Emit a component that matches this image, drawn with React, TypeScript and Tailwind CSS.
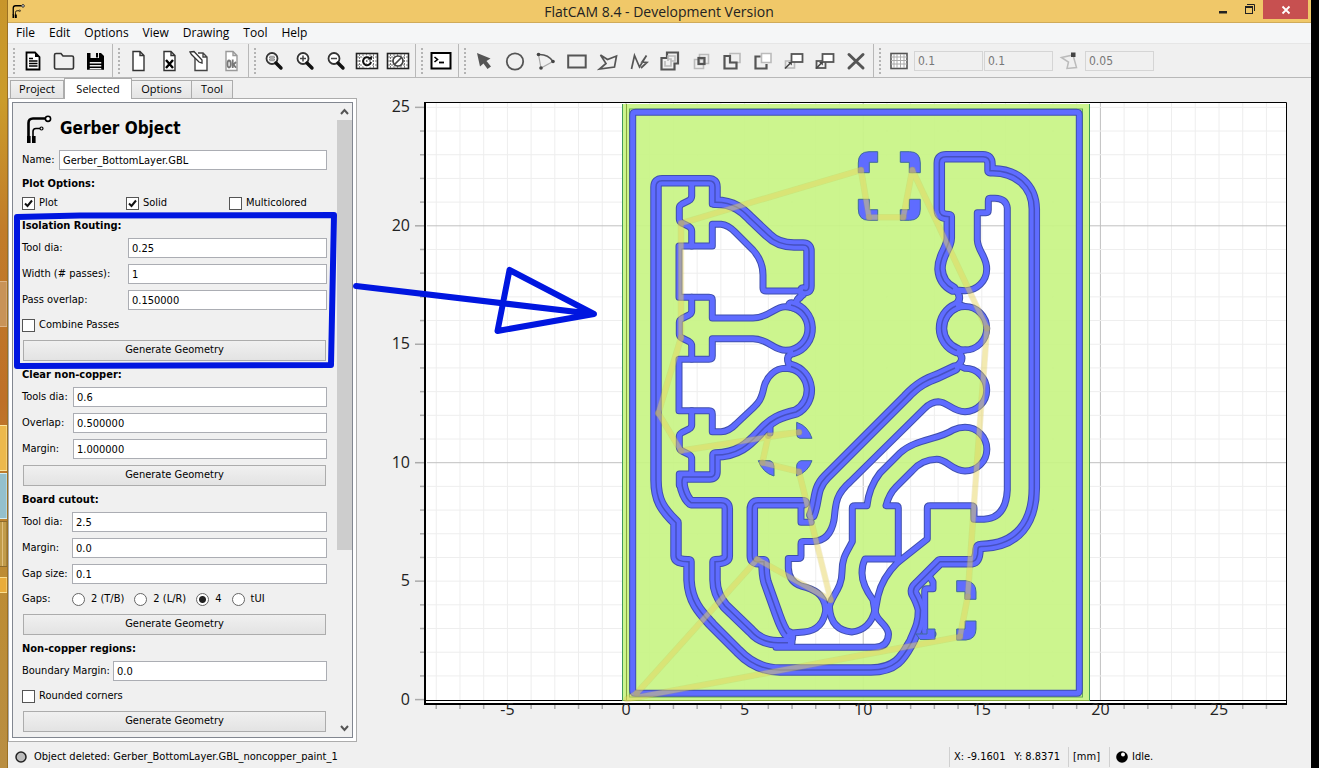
import React, { Fragment, ReactNode } from 'react'

interface FieldProps {
  id: string
  label: string
  value: string
}

const tahoma = "font-['DejaVu_Sans_Condensed','DejaVu_Sans',sans-serif]"
const segoe = "font-['Open_Sans','Noto_Sans',sans-serif]"

// Scene units: one millimetre on each axis, origin at the lower left of the board
const UNIT_X = 23.72
const UNIT_Y = 23.69
const ORIGIN_X = 626
const ORIGIN_Y = 699.6

const px = (mm: number) => ORIGIN_X + mm * UNIT_X
const py = (mm: number) => ORIGIN_Y - mm * UNIT_Y

const range = (from: number, to: number) => Array.from({ length: to - from + 1 }, (_, i) => from + i)

// Areas of bare board between the tracks
const pockets = [
  'M679 246 H712.3 V224.3 H721 Q728 225 735 232 L753 250 Q763 261 763 275 V288 Q763 291 766 291 H800 Q803 298 798 299 Q795 302 798 306 L796 309 Q791 306.7 785.7 306.7 C775 306 769 318 753 318 H712.3 V300 Q712.3 297.3 709 297.3 H679 Z',
  'M679 359.3 H709 Q712.3 359.3 712.3 356 V338.7 H753 C769 339 773 350.3 785.7 350.3 L790 350 L794 352 Q786 355 788 361 L792 369 L785.7 368.3 C775 368.3 767 376 764 387 C761 402 757 404 752 409 L736 424 Q729 431.5 721 431.7 H712.3 V414 Q712.3 410.7 709 410.7 H679 Z',
  'M1007.3 490 V208 Q1006 198.5 995 198.3 H990 Q988.3 198.3 988.3 201 V210 Q988.3 212.7 986 212.7 H977.3 V240 C978 252 986.7 256 986.7 269 A21.7 21.7 0 0 1 965 290.7 L956 290 Q962 297 958 304 L965 306.6 A21.7 21.7 0 0 1 965 350 L958 352 Q965 359 958 365 L965 368.3 A21.7 21.7 0 0 1 965 411.7 C952 411.5 948 402 938.3 401.7 Q931 402 925 408 L850 482 C834 496 836 506 834 520 Q830 541 813 541.5 H803 Q801 541.5 801 544 V556 Q801 558.5 798 558.5 H788.3 V568 Q789 582 801 586 C814 589 824 594 825.5 608 L829 608 C831 596 842 589 842 572 C842 557 847 552 852.3 541.7 V508 Q852.3 505.7 855 505.7 H867 Q869 487 880 473 L900 453 C915 439 938 440 953 430 Q959 427.3 965 427.3 A21.7 21.7 0 0 1 965 471 C952 471 947 459.3 936.7 459.3 Q922 459.5 912 471 L896 487 Q889 494 886 505.7 H896 Q898.3 505.7 898.3 508 V562 L927.3 539 V508 Q927.3 505.7 930 505.7 H971 Q974 505.7 974 508 V519.3 H984 Q1006 518 1007.3 490 Z',
  'M865 559 H898 V562 Q882 578 878 596 L875 612 L873 600 Q862 585 862 573 Q862 565 865 559 Z',
  'M792 633 L804 632 Q824 630 826 608 H829.5 Q831 630 851.7 632 Q870 630 875 610 C875 621 888 624 888.5 634 Q888 647 875 647.3 H776 L792 643 Z',
]

// Isolation passes, one tool width
const singles = [
  'M691.7 182 V196 Q691.7 199 689 200.5 L682 204 Q679.3 205.5 679.3 208 V219 Q679.3 221.7 682 223 L689 226.5 Q691.7 228.5 691.7 231 V246',
  'M712.3 182 V204 H718',
  'M691.7 297.3 V311 Q691.7 313.5 689 315 L682 318.5 Q679.3 320 679.3 322.5 V334 Q679.3 336.5 682 338 L689 341.5 Q691.7 343 691.7 346 V359',
  'M691.7 410.7 V425 Q691.7 427.5 689 429 L682 432.5 Q679.3 434 679.3 436.5 V447 Q679.3 449.5 682 451 L689 454.5 Q691.7 456 691.7 459 V474',
  'M679.3 485 V474 H692',
  'M770 433 V425',
  'M805 502.7 H801 V522.3 H811',
  'M929 576 L933 582 V588.7 H927 Q924.7 588.7 924.7 591 V631 Q924.7 634 927 634 H933',
  'M965 306.6 A21.7 21.7 0 0 0 965 350',
  'M635.5 112.3 H1076.5 Q1079.3 112.3 1079.3 115 V690.5 Q1079.3 693.3 1076.5 693.3 H635.5 Q632.7 693.3 632.7 690.5 V115 Q632.7 112.3 635.5 112.3 Z',
]

// Where the passes of two neighbouring nets run side by side
const doubles = [
  'M803 290 Q809 292 809 286 V251 Q809 245 803 245 H794 C785 245 776 243 768 235 L750 218 C745 213 736 202 715 202.3 V187 Q715 180.7 709 180.7 H662 Q656 180.7 656 187 V480 C656 500 662 509 676 522.7 V556 Q676 562 689 561.7 V580 C690 603 702 614 712 625 L738 651 Q756 670 780 670 H871 C898 670 904 655 912 641 C917 629 920.5 624 920.5 610 Q919 603 914 594 Q912 589 917 584.5 L940 561.7 H972 Q978 561 978 549 Q978 546.5 981 546.5 C1018 546 1034.3 522 1034.3 488 V209 C1034 185 1016 171 993 170.7 H990 V164 Q990 156.7 983 156.7 H946 Q939.3 156.7 939.3 163 V210 Q939.3 216.7 949.3 216.7 V238 C949 249 940 254 940 269 Q941 283 953 289',
  'M791 305 A24 24 0 0 1 793 351.5',
  'M791 366.5 A24.5 24.5 0 0 1 796 412 C779 416 772 420 764 428 C752 440 742 455 715 455 V472 Q715 477 710 477 H683 Q681 482 683 489 Q686 499 691 502.7 H721 Q727.3 502.7 727.3 509 V556 Q727.3 561.7 715 561.7 V580 Q715 594 725 606 L751 631 Q761 642.7 778 642.7 H788',
  'M787 634 C782 628 780 621 776 610 L766 582 Q764 575 764 561.7 H758 Q752.3 561.7 752.3 556 V509 Q752.3 502.7 758 502.7 H804',
  'M812 515 C818 500 814 489 826 477 L906 397 C918 384 927 380 938 376 L955 368',
  'M956 306 A24 24 0 0 0 957 350.500',
]

const necks = [
  'M803 295 Q793 300 799 307',
  'M795 352 Q783 357 791 368',
  'M956 291 Q963 297 955 305',
  'M957 351 Q967 358 957 366',
  'M790 632 Q796 637 789 643',
]

const blobs = [
  'M858.3 172.7 V163 Q858.3 151.7 869 151.7 H877.7 V162.3 H869.3 V172.7 Z',
  'M920.3 172.7 V163 Q920.3 151.7 909.6 151.7 H900.3 V162.3 H909.3 V172.7 Z',
  'M858.3 199.3 V209 Q858.3 220.3 869 220.3 H877.7 V209.7 H869.3 V199.3 Z',
  'M920.3 199.3 V209 Q920.3 220.3 909.6 220.3 H900.3 V209.7 H909.3 V199.3 Z',
  'M956.7 580.7 H966 Q976 582 976 592 V599.3 H965 V591.7 H956.7 Z',
  'M956.7 640 H966 Q976 639 976 629 V621 H965 V629 H956.7 Z',
  'M916 634 H927 V629 H935 V639.5 H920 Z',
  'M796.7 422.3 Q808 426 812 438.3 H800 Q796.7 438 796.7 434 Z',
  'M758.3 460.7 H770 Q774 462 774 466 V476 Q763 473 758.3 460.7 Z',
  'M812 460.7 H801 Q796.7 462 796.7 466 V476 Q808 472 812 460.7 Z',
]

const travel =
  'M626.7 699.3 L637 693 L757.3 559.3 L830.7 600 L799 471.7 L762.3 462.7 L768.3 435.7 L799 432.3 L681 450.7 L658.3 413.3 L681 337.7 V223.3 L861 170 L869 217.3 H903.3 L912.3 170 L987 328.3 L975 490 L967.7 596.7 L960 636.7 Z'

const travelStops = [
  [637, 693], [757.3, 559.3], [830.7, 600], [799, 471.7], [762.3, 462.7], [768.3, 435.7], [799, 432.3],
  [681, 450.7], [658.3, 413.3], [681, 337.7], [681, 223.3], [861, 170], [869, 217.3], [903.3, 217.3],
  [912.3, 170], [987, 328.3], [967.7, 596.7], [960, 636.7],
]

function TrackIcon({ className }: { className: string }) {
  return (
    <svg className={className} viewBox="0 0 26 28" fill="none" stroke="#000">
      <path d="M2.5 22 V8 Q2.5 3.5 7 3.5 H19" strokeWidth="2.6" />
      <path d="M7 22 V16.5 Q7 13.5 10 13.5 H14" strokeWidth="1.6" />
      <circle cx="22" cy="3.8" r="2.6" strokeWidth="1.6" fill="#fff" />
      <circle cx="15.5" cy="13.5" r="1.5" strokeWidth="1.2" />
      <path d="M2.8 21 V28 M7.8 21 V28" strokeWidth="3.6" />
    </svg>
  )
}

const page = 'M7 2.5 H14 L18 6.5 V21.5 H7 Z M14 2.5 V6.5 H18'

const magnifier = (
  <Fragment>
    <circle cx="10" cy="9.5" r="5.5" stroke="#333" strokeWidth="1.8" fill="#fff" />
    <path d="M14 14 L19 19" stroke="#111" strokeWidth="3.4" strokeLinecap="round" />
  </Fragment>
)

const mesh = (
  <Fragment>
    <rect x="1.5" y="4.5" width="21" height="15" stroke="#222" strokeWidth="1.6" fill="#fff" />
    <path d="M4.5 5 V19 M8 5 V19 M11.5 5 V19 M15 5 V19 M18.5 5 V19 M2 8 H22 M2 12 H22 M2 16 H22" stroke="#777" strokeWidth="1" strokeDasharray="2 1" />
  </Fragment>
)

const back = { stroke: '#bbb', strokeWidth: 1.6 }
const front = { stroke: '#555', strokeWidth: 2.2 }

const icons: Record<string, ReactNode> = {
  'New project': (
    <Fragment>
      <path d="M5.5 3.5 H14 L18.5 8 V20.5 H5.5 Z" stroke="#000" strokeWidth="1.8" fill="#fff" />
      <path d="M14 3 V8 H19 Z" fill="#000" />
      <path d="M8 9.5 H12 M8 12 H16.5 M8 14.5 H16.5 M8 17 H16.5" stroke="#000" strokeWidth="1.5" />
    </Fragment>
  ),
  'Open project': <path d="M2.5 6 Q2.5 4.5 4 4.5 H9 L11 7 H20 Q21.5 7 21.5 8.5 V18.5 Q21.5 20 20 20 H4 Q2.5 20 2.5 18.5 Z" stroke="#333" strokeWidth="1.6" />,
  'Save project': (
    <Fragment>
      <path d="M4 4 H18 L21 7 V20.5 H4 Z" fill="#000" />
      <path d="M7.5 4 H16 V9 H7.5 Z M6.5 12 H18.5 V20 H6.5 Z" fill="#eee" />
      <path d="M13 4 H15 V8.5 H13 Z M4 11 H21 V20.5 H18.5 V13 H6.5 V20.5 H4 Z M6.5 14.5 H18.5 V16 H6.5 Z M6.5 17.5 H18.5 V19 H6.5 Z" fill="#000" />
    </Fragment>
  ),
  'New geometry': <path d={page} stroke="#333" strokeWidth="1.4" fill="#fff" />,
  'Delete object': (
    <Fragment>
      <path d={page} stroke="#333" strokeWidth="1.4" fill="#fff" />
      <path d="M9 11 L16 19 M16 11 L9 19" stroke="#000" strokeWidth="2.4" />
    </Fragment>
  ),
  'Edit geometry': (
    <Fragment>
      <path d="M7 8 V21.5 H19 V8 L15 4 H10 M15 4 V8 H19" stroke="#444" strokeWidth="1.4" fill="#fff" />
      <path d="M2 3 L6 2.5 L14 11 V14 L11 13 L3.5 5.5 Z" stroke="#333" strokeWidth="1.3" fill="#fff" />
    </Fragment>
  ),
  'Update geometry': (
    <Fragment>
      <path d={page} stroke="#999" strokeWidth="1.4" fill="#fff" />
      <path d="M10 11.5 Q8.5 11.5 8.5 15 Q8.5 18.5 10 18.5 Q11.7 18.5 11.7 15 Q11.7 11.5 10 11.5 M13.7 10.5 V19 M17 13 L14.5 15.5 L17 18.7" stroke="#777" strokeWidth="1.8" />
    </Fragment>
  ),
  'Zoom fit': (
    <Fragment>
      {magnifier}
      <rect x="7.5" y="7" width="5" height="5" fill="#aaa" stroke="#888" strokeDasharray="1 1" />
    </Fragment>
  ),
  'Zoom in': (
    <Fragment>
      {magnifier}
      <path d="M7 9.5 H13 M10 6.5 V12.5" stroke="#444" strokeWidth="1.5" />
    </Fragment>
  ),
  'Zoom out': (
    <Fragment>
      {magnifier}
      <path d="M7 9.5 H13" stroke="#444" strokeWidth="1.5" />
    </Fragment>
  ),
  Replot: (
    <Fragment>
      {mesh}
      <path d="M15 9.5 A4.2 4.2 0 1 0 16.2 13" stroke="#fff" strokeWidth="4" />
      <path d="M14.5 9 A4 4 0 1 0 16 13" stroke="#111" strokeWidth="2" />
      <path d="M12.5 10.5 L17 10.8 L16.8 6.5 Z" fill="#111" />
    </Fragment>
  ),
  'Clear plot': (
    <Fragment>
      {mesh}
      <circle cx="12" cy="12" r="5" stroke="#444" strokeWidth="1.7" fill="#fff" />
      <path d="M8.5 15.5 L15.5 8.5" stroke="#444" strokeWidth="1.7" />
    </Fragment>
  ),
  Shell: (
    <Fragment>
      <rect x="2.5" y="4" width="19" height="15.5" stroke="#000" strokeWidth="2" fill="#fff" />
      <path d="M5.5 8 L8.5 10.5 L5.5 13" stroke="#000" strokeWidth="1.6" />
      <path d="M10 13.5 H15" stroke="#000" strokeWidth="1.8" />
    </Fragment>
  ),
  Select: <path d="M5 4 L18.5 9.5 L14.5 12 L19 17.5 L15.5 20 L11.5 14.5 L8 17.5 Z" fill="#555" />,
  Circle: <circle cx="12" cy="12.5" r="8.2" stroke="#555" strokeWidth="1.8" />,
  Arc: (
    <Fragment>
      <path d="M4.5 5.5 L7 19 L19 12.5" stroke="#aaa" strokeWidth="1.2" />
      <path d="M4.5 5.5 Q14 5 19 12.5" stroke="#555" strokeWidth="1.6" />
      <circle cx="4.5" cy="5.5" r="1.8" fill="#444" />
      <circle cx="7" cy="19" r="1.8" fill="#444" />
      <circle cx="19" cy="12.5" r="1.8" fill="#444" />
    </Fragment>
  ),
  Rectangle: <rect x="3.2" y="6.5" width="17.5" height="12" stroke="#555" strokeWidth="2" />,
  Polygon: <path d="M4.5 6 L11.5 10.5 L20.5 7 L18.5 18 L3.5 20 L10 14.5 Z" stroke="#555" strokeWidth="1.7" />,
  Path: <path d="M4.5 20 L7.5 6.5 L12.5 18 L19.5 6.5 L15 13 L20 13.5 L14 19" stroke="#555" strokeWidth="1.7" />,
  Union: (
    <Fragment>
      <path d="M9 3.5 H20 V14.5 H16.5 V20.5 H3.5 V9 H9 Z" {...front} />
      <path d="M7 12 V17 H13 V10 H10 M10 12 V7 H17 V12 H13" {...back} />
    </Fragment>
  ),
  Intersection: (
    <Fragment>
      <path d="M10.5 5.5 H19.5 V14.5 H10.5 Z M5.5 10.5 H14.5 V19.5 H5.5 Z" {...back} />
      <rect x="9.5" y="9" width="6" height="6" {...front} />
    </Fragment>
  ),
  Subtraction: (
    <Fragment>
      <path d="M10 4.5 H20 V13.5 H10 Z" {...back} />
      <path d="M4.5 7 H10 V13.5 H16.5 V19.5 H4.5 Z" {...front} />
    </Fragment>
  ),
  Cut: (
    <Fragment>
      <path d="M10.5 4.5 H20 V13.5 H10.5 Z" {...back} fill="#fff" />
      <path d="M9.5 7.5 H4.5 V19.5 H15.5 V15" {...front} />
    </Fragment>
  ),
  Move: (
    <Fragment>
      <rect x="3.5" y="12" width="9" height="7" {...back} />
      <rect x="9.5" y="5" width="11" height="8" {...front} strokeWidth={1.8} fill="#fff" />
      <path d="M3 19.5 L9 13.5" stroke="#444" strokeWidth="1.6" />
      <path d="M6 13 H9.8 V16.5 Z" fill="#444" />
    </Fragment>
  ),
  Copy: (
    <Fragment>
      <rect x="3.5" y="12" width="9" height="7" {...front} strokeWidth={1.8} />
      <rect x="9.5" y="5" width="11" height="8" {...front} strokeWidth={1.8} fill="#fff" />
      <path d="M3 19.5 L9 13.5" stroke="#444" strokeWidth="1.6" />
      <path d="M6 13 H9.8 V16.5 Z" fill="#444" />
    </Fragment>
  ),
  Delete: <path d="M5 5.5 L19 19 M19 5.5 L5 19" stroke="#555" strokeWidth="3" strokeLinecap="round" />,
  'Snap to grid': (
    <Fragment>
      <rect x="4" y="4.5" width="16" height="15" stroke="#555" strokeWidth="1.6" fill="#fff" />
      <path d="M7 5 V19 M10 5 V19 M13.5 5 V19 M17 5 V19 M4 8 H20 M4 11.5 H20 M4 15 H20" stroke="#aaa" />
    </Fragment>
  ),
  'Snap to corner': (
    <Fragment>
      <path d="M3.5 8.5 L15 6 L18.5 18.5 L9 19.5 L10.5 13 Z" stroke="#bbb" strokeWidth="1.5" />
      <rect x="13" y="3.5" width="4.5" height="4.5" fill="#444" />
    </Fragment>
  ),
}

const toolGroups = [
  ['New project', 'Open project', 'Save project'],
  ['New geometry', 'Delete object', 'Edit geometry', 'Update geometry'],
  ['Zoom fit', 'Zoom in', 'Zoom out', 'Replot', 'Clear plot'],
  ['Shell'],
  ['Select', 'Circle', 'Arc', 'Rectangle', 'Polygon', 'Path', 'Union', 'Intersection', 'Subtraction', 'Cut', 'Move', 'Copy', 'Delete'],
]

function Tool({ name }: { name: string }) {
  return (
    <button type="button" aria-label={name} className="flex w-[31px] shrink-0 items-center justify-center">
      <svg width="24" height="24" viewBox="0 0 24 24" fill="none">{icons[name]}</svg>
    </button>
  )
}

function Handle() {
  return <span className="mr-0.5 h-[26px] w-0 shrink-0 border-l-2 border-dotted border-[#b4b4b4]" />
}

function SnapInput({ label, value }: { label: string, value: string }) {
  return (
    <input
      aria-label={label}
      defaultValue={value}
      disabled
      className="mr-px h-5 w-[69px] border border-[#d5d5d5] bg-[#f0f0f0] px-[3px] text-[12px] text-[#777]"
    />
  )
}

function Toolbar() {
  return (
    <div className="flex h-[34px] shrink-0 items-stretch overflow-hidden border-b border-[#b8b8b8]">
      {toolGroups.map((group) => (
        <div key={group[0]} className="flex items-center border-r border-[#b8b8b8] pr-0.5 pl-[5px]">
          <Handle />
          {group.map((name) => <Tool key={name} name={name} />)}
        </div>
      ))}
      <div className="flex items-center pl-[5px]">
        <Handle />
        <Tool name="Snap to grid" />
        <SnapInput label="Grid X" value="0.1" />
        <SnapInput label="Grid Y" value="0.1" />
        <Tool name="Snap to corner" />
        <SnapInput label="Corner tolerance" value="0.05" />
      </div>
    </div>
  )
}

function TitleBar() {
  return (
    <div className="flex h-[23px] shrink-0 items-start border-b border-[#d0ab5a] bg-[#f0c869]">
      <TrackIcon className="mt-1 ml-1 h-[14px] w-[13px]" />
      <h1 className={`${segoe} flex-1 pl-[83px] text-center text-[14px] leading-[24px] text-[#222]`}>FlatCAM 8.4 - Development Version</h1>
      <button type="button" aria-label="Minimize" className="flex h-[18px] w-[26px] items-center justify-center">
        <svg width="10" height="14" viewBox="0 0 10 14"><path d="M1 9 H9 V11.500 H1 Z" fill="#222" /></svg>
      </button>
      <button type="button" aria-label="Restore" className="flex h-[18px] w-[27px] items-center justify-center">
        <svg width="12" height="12" viewBox="0 0 12 12" fill="none" stroke="#222">
          <path d="M3 1.5 H10.5 V8" />
          <rect x="1.5" y="3.5" width="7" height="7" />
          <path d="M1 4 H9" strokeWidth="2" />
        </svg>
      </button>
      <button type="button" aria-label="Close" className="mr-[3px] flex h-[19px] w-[45px] items-center justify-center bg-[#c75050]">
        <svg width="10" height="10" viewBox="0 0 10 10"><path d="M1.5 1.5 L8.5 8.5 M8.5 1.5 L1.5 8.5" stroke="#fff" strokeWidth="1.8" /></svg>
      </button>
    </div>
  )
}

function MenuBar() {
  return (
    <nav className={`${segoe} flex h-[21px] shrink-0 items-center gap-3.5 border-b border-[#e6e6e6] bg-[#f5f6f7] pl-2 text-[12px] text-black`}>
      {['File', 'Edit', 'Options', 'View', 'Drawing', 'Tool', 'Help'].map((item) => <a key={item} href="#">{item}</a>)}
    </nav>
  )
}

function Tabs() {
  const tab = 'h-[18px] border border-b-0 border-[#acacac] bg-linear-to-b from-[#f2f2f2] to-[#e4e4e4]'
  return (
    <div role="tablist" className={`${segoe} flex h-5 shrink-0 items-end pl-0.5 text-[11px] text-black`}>
      <button type="button" role="tab" className={`${tab} w-[54px]`}>Project</button>
      <button type="button" role="tab" aria-selected="true" className="relative top-px h-[21px] w-[68px] border border-b-0 border-[#acacac] bg-white">Selected</button>
      <button type="button" role="tab" className={`${tab} w-[60px] border-l-0`}>Options</button>
      <button type="button" role="tab" className={`${tab} w-[41px] border-l-0`}>Tool</button>
    </div>
  )
}

function Field({ id, label, value }: FieldProps) {
  return (
    <Fragment>
      <label htmlFor={id} className="whitespace-nowrap">{label}</label>
      <input id={id} defaultValue={value} className="h-5 w-full min-w-0 border border-[#abadb3] bg-white px-[3px]" />
    </Fragment>
  )
}

function Check({ label, checked = false }: { label: string, checked?: boolean }) {
  return (
    <label className="flex h-[18px] items-center gap-1">
      <span className="relative flex size-[13px]">
        <input type="checkbox" defaultChecked={checked} className="peer size-[13px] appearance-none border border-[#555] bg-white" />
        <svg viewBox="0 0 13 13" className="pointer-events-none absolute inset-0 hidden peer-checked:block" fill="none">
          <path d="M3 6.5 L5.5 9 L10 3.5" stroke="#111" strokeWidth="2" />
        </svg>
      </span>
      {label}
    </label>
  )
}

function Gap({ label, checked = false }: { label: string, checked?: boolean }) {
  return (
    <label className="flex h-[18px] items-center gap-1.5">
      <input type="radio" name="gaps" defaultChecked={checked} className="size-[13px] appearance-none rounded-full border border-[#666] bg-white checked:bg-[radial-gradient(#222_3px,#fff_4px)]" />
      {label}
    </label>
  )
}

function Generate() {
  return (
    <button type="button" className="mx-px h-[21px] border border-[#acacac] bg-linear-to-b from-[#f0f0f0] to-[#e3e3e3]">Generate Geometry</button>
  )
}

function Section({ title, children }: { title: string, children: ReactNode }) {
  return (
    <section className="flex flex-col gap-1.5">
      <h3 className="-mb-0.5 h-4 leading-4 font-bold">{title}</h3>
      {children}
    </section>
  )
}

function GerberPanel() {
  return (
    <div className="min-h-0 flex-1 border border-[#acacac] bg-white p-[3px]">
      <div className="flex h-full overflow-hidden border border-[#828790] bg-[#f0f0f0]">
        <form className="flex min-w-0 flex-1 flex-col gap-1.5 pr-2.5 pl-[9px] text-[11px] text-black">
          <div className="-mb-1.5 flex h-[47px] items-center gap-2 pt-1 pl-1">
            <TrackIcon className="h-7 w-[26px]" />
            <h2 className="text-[17px] font-bold">Gerber Object</h2>
          </div>
          <div className="grid grid-cols-[37px_1fr] items-center">
            <Field id="name" label="Name:" value="Gerber_BottomLayer.GBL" />
          </div>
          <section>
            <h3 className="mb-0.5 h-4 leading-4 font-bold">Plot Options:</h3>
            <div className="grid grid-cols-[104px_103px_1fr]">
              <Check label="Plot" checked />
              <Check label="Solid" checked />
              <Check label="Multicolored" />
            </div>
          </section>
          <Section title="Isolation Routing:">
            <div className="grid grid-cols-[106px_1fr] items-center gap-y-1.5">
              <Field id="iso-dia" label="Tool dia:" value="0.25" />
              <Field id="iso-passes" label="Width (# passes):" value="1" />
              <Field id="iso-overlap" label="Pass overlap:" value="0.150000" />
            </div>
            <Check label="Combine Passes" />
            <Generate />
          </Section>
          <Section title="Clear non-copper:">
            <div className="grid grid-cols-[51px_1fr] items-center gap-y-1.5">
              <Field id="ncc-dia" label="Tools dia:" value="0.6" />
              <Field id="ncc-overlap" label="Overlap:" value="0.500000" />
              <Field id="ncc-margin" label="Margin:" value="1.000000" />
            </div>
            <Generate />
          </Section>
          <Section title="Board cutout:">
            <div className="grid grid-cols-[50px_1fr] items-center gap-y-1.5">
              <Field id="cut-dia" label="Tool dia:" value="2.5" />
              <Field id="cut-margin" label="Margin:" value="0.0" />
              <Field id="cut-gap" label="Gap size:" value="0.1" />
            </div>
            <div className="flex items-center gap-2.5">
              <span className="w-10">Gaps:</span>
              <Gap label="2 (T/B)" />
              <Gap label="2 (L/R)" />
              <Gap label="4" checked />
              <Gap label="tUI" />
            </div>
            <Generate />
          </Section>
          <Section title="Non-copper regions:">
            <div className="grid grid-cols-[91px_1fr] items-center">
              <Field id="reg-margin" label="Boundary Margin:" value="0.0" />
            </div>
            <Check label="Rounded corners" />
            <Generate />
          </Section>
        </form>
        <div className="flex w-[15px] shrink-0 flex-col items-center">
          <svg width="15" height="17" viewBox="0 0 15 17" fill="none"><path d="M4 11 L7.5 7 L11 11" stroke="#555" strokeWidth="2" /></svg>
          <div className="min-h-0 w-full flex-[430] bg-[#cdcdcd]" />
          <div className="flex-[170]" />
          <svg width="15" height="17" viewBox="0 0 15 17" fill="none"><path d="M4 6 L7.5 10 L11 6" stroke="#555" strokeWidth="2" /></svg>
        </div>
      </div>
    </div>
  )
}

function Plot() {
  const thin = [...pockets, ...singles, ...necks]
  return (
    <svg className="h-full w-full" viewBox="357 78 954 664" preserveAspectRatio="xMinYMin meet" fill="none" role="img" aria-label="Board plot">
      <rect x="425" y="102" width="861" height="601" fill="#fff" />
      {range(-8, 27).map((mm) => (
        <path key={`v${mm}`} d={`M${px(mm)} 103 V701`} stroke={mm % 10 === 0 ? '#c0c0c0' : '#eee'} />
      ))}
      {range(1, 25).map((mm) => (
        <path key={`h${mm}`} d={`M427 ${py(mm)} H1286`} stroke={mm % 10 === 0 ? '#c0c0c0' : '#eee'} />
      ))}
      <path d="M425 700.5 H1286" stroke="#000" />

      <path d={`M622.5 104 H1089.5 V701 H622.5 Z ${pockets.join(' ')}`} fill="#c8f484" fillOpacity="0.92" fillRule="evenodd" />
      <path d="M622.5 104 V701 M1089.5 104 V701" stroke="#3f9a5a" />
      <path d="M626.5 104 V701 M623 700.5 H1089" stroke="#86a83c" />
      <rect x="629.5" y="109" width="453" height="588" stroke="#5fa653" />

      <g stroke="#3f4fae" strokeLinejoin="round" strokeLinecap="round">
        {thin.map((d) => <path key={d} d={d} strokeWidth="7" />)}
        {doubles.map((d) => <path key={d} d={d} strokeWidth="11.5" />)}
      </g>
      <g stroke="#5f6cff" strokeLinejoin="round" strokeLinecap="round">
        {thin.map((d) => <path key={d} d={d} strokeWidth="5" />)}
        {doubles.map((d) => <path key={d} d={d} strokeWidth="9.5" />)}
      </g>
      <g stroke="#4650c0" strokeWidth="1.5">
        {doubles.map((d) => <path key={d} d={d} />)}
      </g>
      {blobs.map((d) => <path key={d} d={d} fill="#5f6cff" stroke="#3f6a9c" strokeLinejoin="round" />)}

      <path d={travel} stroke="#c8b030" strokeOpacity="0.2" strokeWidth="6.5" strokeLinejoin="round" />
      <path d={travel} stroke="#f0e070" strokeOpacity="0.36" strokeWidth="5" strokeLinejoin="round" />
      {travelStops.map(([x, y]) => <circle key={`${x}-${y}`} cx={x} cy={y} r="3.2" fill="#b5a86a" fillOpacity="0.5" />)}

      <path d="M425 102.5 H1286.5 V704" stroke="#000" />
      <path d="M425 102 V704 H1287" stroke="#000" strokeWidth="2" />

      {range(0, 25).map((mm) => (
        <path key={`ty${mm}`} d={`M${mm % 5 === 0 ? 415 : 420} ${py(mm)} H424`} stroke="#aaa" strokeWidth="1.5" />
      ))}
      {range(-8, 27).filter((mm) => mm % 5 !== 0).map((mm) => (
        <path key={`tx${mm}`} d={`M${px(mm)} 705 V709`} stroke="#aaa" strokeWidth="1.5" />
      ))}
      <g className={segoe} fontSize="16" fill="#222">
        {[0, 5, 10, 15, 20, 25].map((mm) => <text key={mm} x="410" y={py(mm) + 5} textAnchor="end">{mm}</text>)}
        {[-5, 0, 5, 10, 15, 20, 25].map((mm) => <text key={mm} x={px(mm)} y="715" textAnchor="middle">{mm}</text>)}
      </g>
    </svg>
  )
}

function StatusBar() {
  return (
    <footer className="flex h-[26px] shrink-0 items-center pt-1 text-[11px] text-black">
      <svg className="mx-[7px] size-3" viewBox="0 0 12 12"><circle cx="6" cy="6" r="5" fill="#bbb" stroke="#222" strokeWidth="1.5" /></svg>
      <span className="flex-1">Object deleted: Gerber_BottomLayer.GBL_noncopper_paint_1</span>
      <span className="flex h-5 w-[119px] items-center justify-between border-l border-[#d0d0d0] pr-2 pl-1"><span>X: -9.1601</span><span>Y: 8.8371</span></span>
      <span className="flex h-5 w-[41px] items-center border-l border-[#d0d0d0] pl-1">[mm]</span>
      <span className="flex h-5 w-[202px] items-center gap-1 border-l border-[#d0d0d0] pl-1.5">
        <svg className="size-3" viewBox="0 0 12 12"><circle cx="6" cy="6" r="5.8" fill="#000" /><circle cx="7" cy="3.6" r="2" fill="#fff" /></svg>
        Idle.
      </span>
    </footer>
  )
}

function Desktop() {
  return (
    <svg className="h-full w-2 shrink-0" viewBox="0 0 8 768" preserveAspectRatio="none">
      <defs>
        <linearGradient id="wall" x1="0" y1="0" x2="0" y2="1">
          <stop offset="0" stopColor="#c8952b" />
          <stop offset="0.13" stopColor="#cb9c2b" />
          <stop offset="0.3" stopColor="#c17c2a" />
          <stop offset="0.52" stopColor="#be7028" />
          <stop offset="0.75" stopColor="#bd8c33" />
          <stop offset="1" stopColor="#b98e42" />
        </linearGradient>
      </defs>
      <rect width="8" height="768" fill="url(#wall)" />
      <rect x="-1" y="281.500" width="8" height="45" fill="#c89358" stroke="#dcb488" />
      <rect x="-1" y="425.500" width="8" height="45" fill="#ecb94c" stroke="#fbe6a0" />
      <rect x="-1" y="473.500" width="8" height="45" fill="#94c0cc" stroke="#d5eef2" />
      <rect x="-1" y="521.500" width="8" height="45" fill="#c19b4a" stroke="#8d6a2c" />
      <path d="M2.500 522 V566" stroke="#e0c080" />
      <rect x="-1" y="577.500" width="8" height="15" fill="#e9ac3a" stroke="#fbdf90" />
      <path d="M7.500 0 V768" stroke="#9a7024" />
    </svg>
  )
}

// Hand drawn marks that point from the isolation settings to the plot
function Marks() {
  return (
    <svg className="pointer-events-none absolute inset-0 h-full w-full" fill="none" stroke="#0016e0" strokeLinecap="round" strokeLinejoin="round">
      <path d="M17 217 L80 215.500 L334 215 L331 365 L17 366 Z" strokeWidth="6" />
      <path d="M356 286 L594 314 L509.500 270 L497.500 331 L594 314" strokeWidth="6" />
    </svg>
  )
}

export default function App() {
  return (
    <div className={`${tahoma} relative flex h-screen overflow-hidden bg-[#f0f0f0]`}>
      <Desktop />
      <main className="flex min-w-0 flex-1 flex-col">
        <TitleBar />
        <MenuBar />
        <Toolbar />
        <div className="flex min-h-0 flex-1">
          <aside className="flex w-[349px] shrink-0 flex-col">
            <Tabs />
            <GerberPanel />
          </aside>
          <div className="min-w-0 flex-1">
            <Plot />
          </div>
        </div>
        <StatusBar />
      </main>
      <div className="w-2 shrink-0 bg-black" />
      <Marks />
    </div>
  )
}
